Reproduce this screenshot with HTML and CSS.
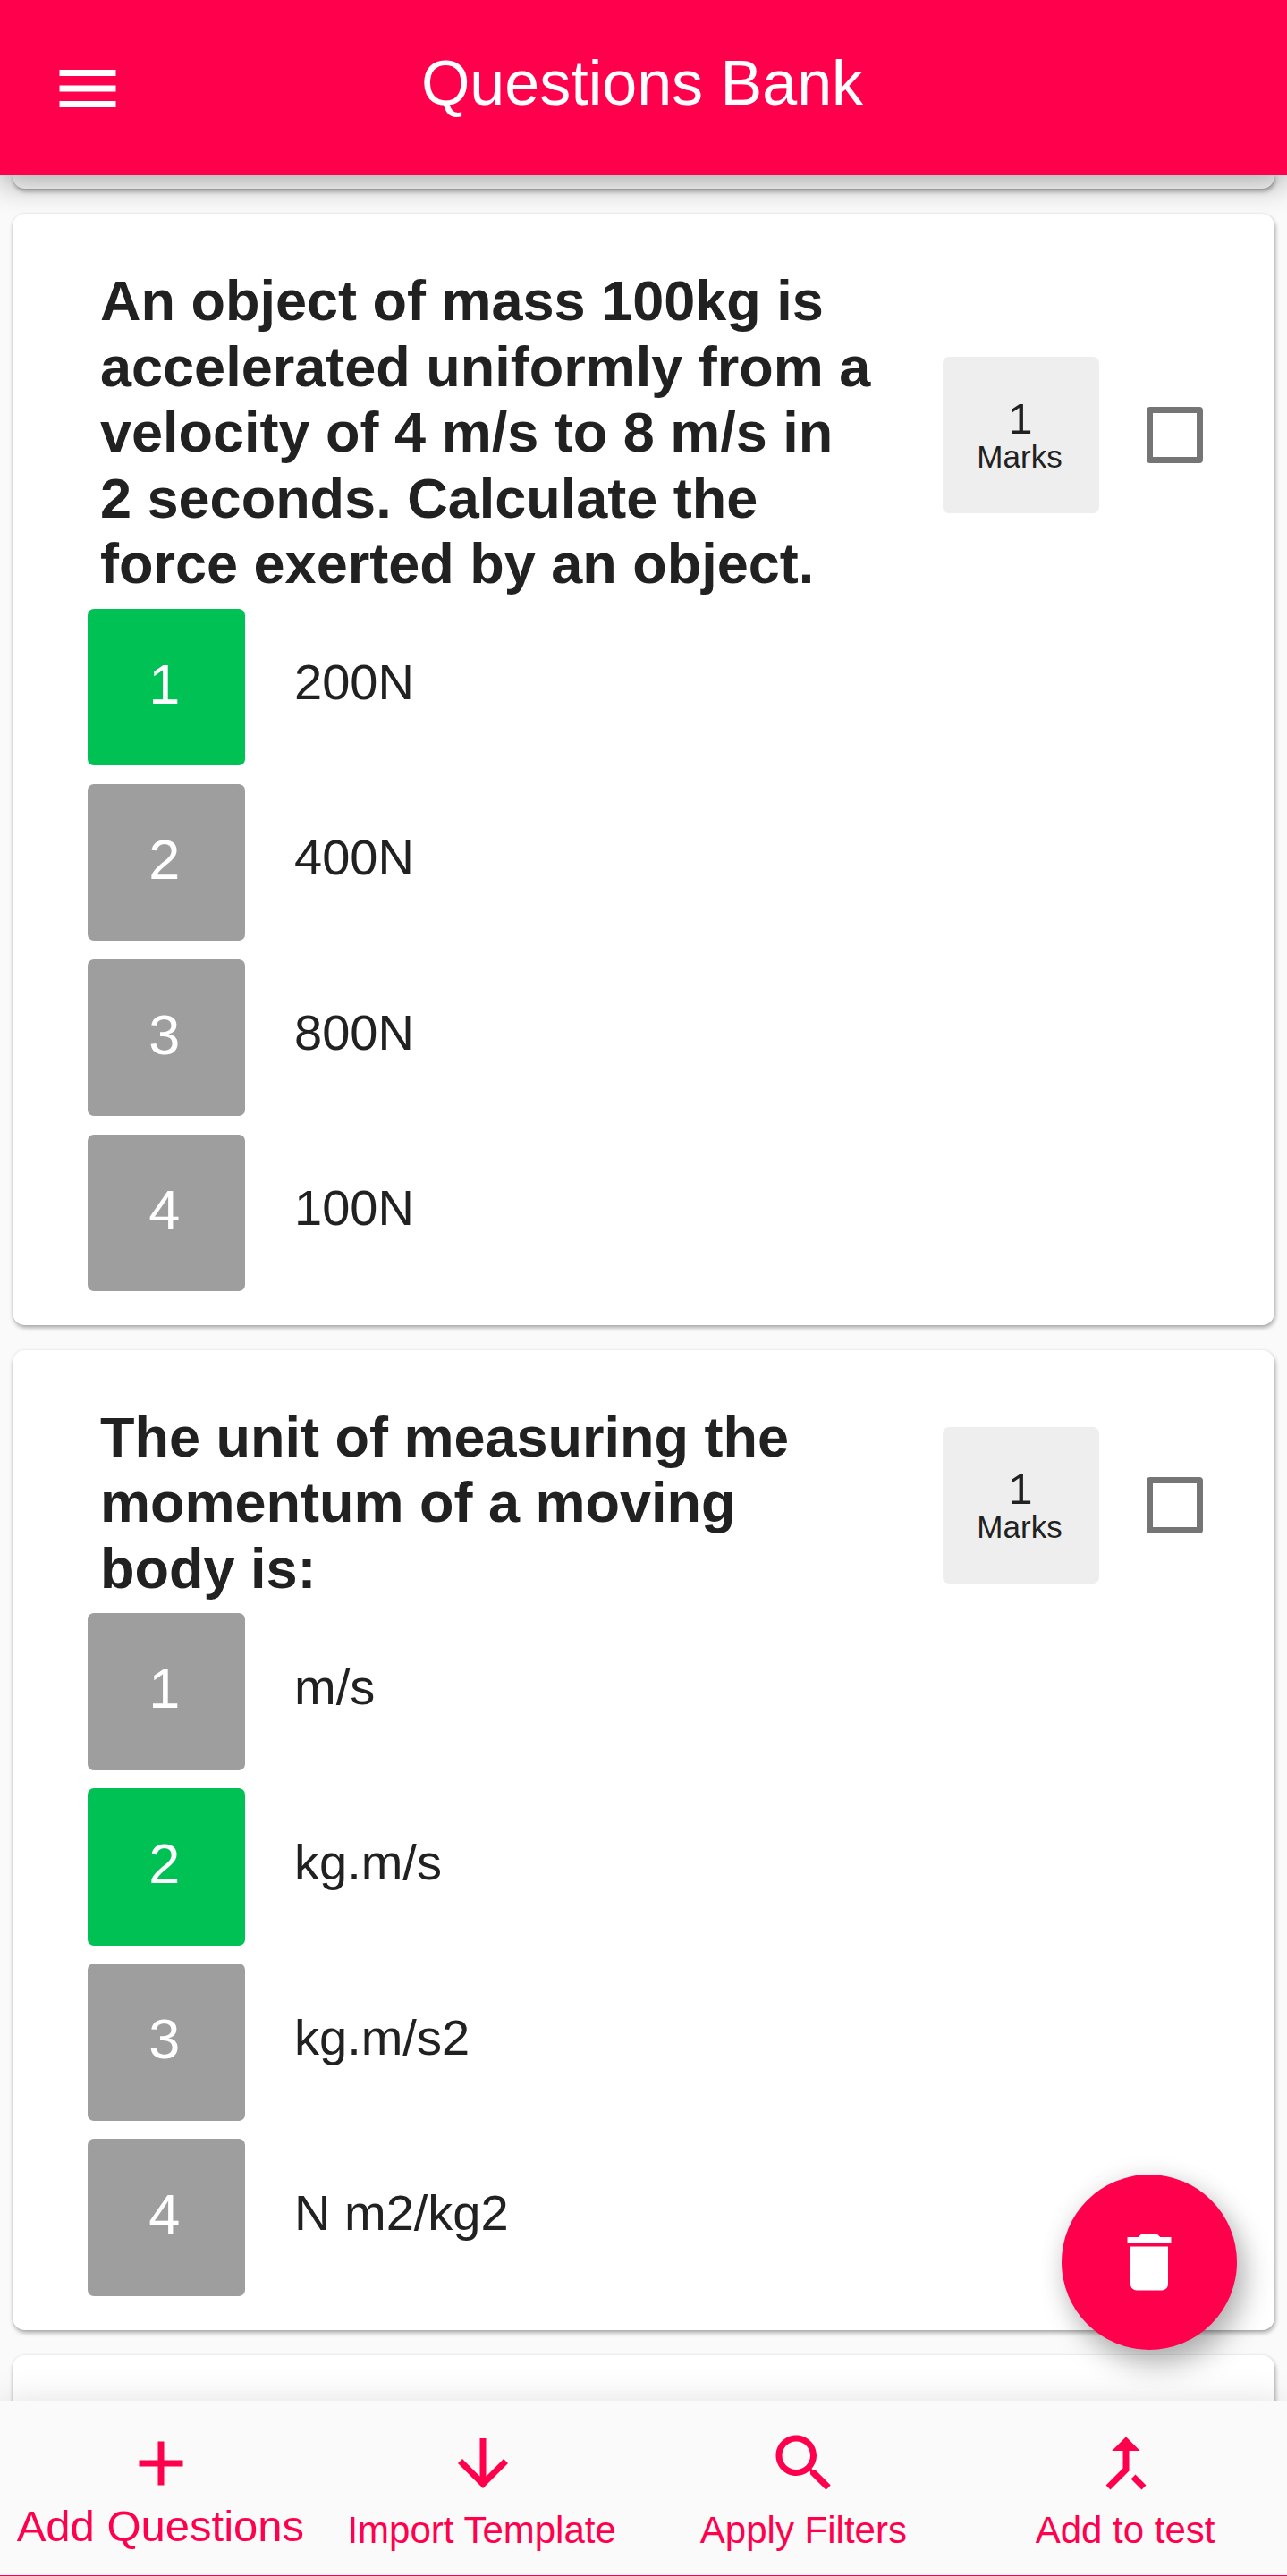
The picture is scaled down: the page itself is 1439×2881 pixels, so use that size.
FILE: index.html
```html
<!DOCTYPE html>
<html lang="en">
<head>
<meta charset="utf-8">
<title>Questions Bank</title>
<link rel="stylesheet" href="styles.css">
</head>
<body>
<div class="app">
  <header class="app-bar">
    <svg class="icon menu-icon" viewBox="0 0 24 24"><path d="M3 18h18v-2H3v2zm0-5h18v-2H3v2zm0-7v2h18V6H3z"/></svg>
    <h1 class="app-title">Questions Bank</h1>
  </header>

  <main class="list">
    <article class="card card-prev"></article>

    <article class="card">
      <div class="card-head">
        <h2 class="question">An object of mass 100kg is accelerated uniformly from a velocity of 4 m/s to 8 m/s in 2 seconds. Calculate the force exerted by an object.</h2>
        <div class="marks"><span class="marks-value">1</span><span class="marks-label">Marks</span></div>
        <span class="checkbox"></span>
      </div>
      <ol class="options">
        <li class="option"><span class="tile correct">1</span><span class="answer">200N</span></li>
        <li class="option"><span class="tile">2</span><span class="answer">400N</span></li>
        <li class="option"><span class="tile">3</span><span class="answer">800N</span></li>
        <li class="option"><span class="tile">4</span><span class="answer">100N</span></li>
      </ol>
    </article>

    <article class="card">
      <div class="card-head">
        <h2 class="question">The unit of measuring the momentum of a moving body is:</h2>
        <div class="marks"><span class="marks-value">1</span><span class="marks-label">Marks</span></div>
        <span class="checkbox"></span>
      </div>
      <ol class="options">
        <li class="option"><span class="tile">1</span><span class="answer">m/s</span></li>
        <li class="option"><span class="tile correct">2</span><span class="answer">kg.m/s</span></li>
        <li class="option"><span class="tile">3</span><span class="answer">kg.m/s2</span></li>
        <li class="option"><span class="tile">4</span><span class="answer">N m2/kg2</span></li>
      </ol>
    </article>

    <article class="card card-next"></article>
  </main>

  <nav class="bottom-nav">
    <a class="nav-item active">
      <svg class="icon" viewBox="0 0 24 24"><path d="M19 13h-6v6h-2v-6H5v-2h6V5h2v6h6v2z"/></svg>
      <span class="nav-label">Add Questions</span>
    </a>
    <a class="nav-item">
      <svg class="icon" viewBox="0 0 24 24"><path d="M20 12l-1.41-1.41L13 16.17V4h-2v12.17l-5.58-5.59L4 12l8 8 8-8z"/></svg>
      <span class="nav-label">Import Template</span>
    </a>
    <a class="nav-item">
      <svg class="icon" viewBox="0 0 24 24"><path d="M15.5 14h-.79l-.28-.27C15.41 12.59 16 11.11 16 9.5 16 5.91 13.09 3 9.5 3S3 5.91 3 9.5 5.91 16 9.5 16c1.61 0 3.09-.59 4.23-1.57l.27.28v.79l5 4.99L20.49 19l-4.99-5zm-6 0C7.01 14 5 11.99 5 9.5S7.01 5 9.5 5 14 7.01 14 9.5 11.99 14 9.5 14z"/></svg>
      <span class="nav-label">Apply Filters</span>
    </a>
    <a class="nav-item">
      <svg class="icon" viewBox="0 0 24 24"><path d="M17 20.41L18.41 19 15 15.59 13.59 17 17 20.41zM7.5 8H11v5.59L5.59 19 7 20.41l6-6V8h3.5L12 3.5 7.5 8z"/></svg>
      <span class="nav-label">Add to test</span>
    </a>
  </nav>

  <button class="fab" aria-label="Delete">
    <svg class="icon" viewBox="0 0 24 24"><path d="M6 19c0 1.1.9 2 2 2h8c1.1 0 2-.9 2-2V7H6v12zM19 4h-3.5l-1-1h-5l-1 1H5v2h14V4z"/></svg>
  </button>
</div>
</body>
</html>
```
FILE: styles.css
```css
* { box-sizing: border-box; }

body {
  margin: 0;
  font-family: "Liberation Sans", Arial, sans-serif;
  color: #212121;
  background: #fafafa;
}

.app {
  position: relative;
  display: flex;
  flex-direction: column;
  height: 2881px;
  overflow: hidden;
}

.icon {
  display: block;
  flex: none;
  width: 84px;
  height: 84px;
  fill: currentColor;
}

/* Top bar */
.app-bar {
  position: relative;
  z-index: 2;
  flex: none;
  display: grid;
  grid-template-columns: 140px 1fr 143px;
  align-items: center;
  height: 196px;
  padding-top: 2px;
  color: #fff;
  background: #ff004d;
  box-shadow: 0 10px 32px rgba(0, 0, 0, .33);
}

.menu-icon { justify-self: end; }

.app-title {
  margin: 0;
  padding-bottom: 12px;
  font-size: 70px;
  font-weight: 400;
  line-height: 80px;
  text-align: center;
}

/* Question list */
.list {
  flex: 1;
  min-height: 0;
  display: flex;
  flex-direction: column;
  gap: 28px;
  padding: 0 14px;
  overflow: hidden;
}

.card {
  flex: none;
  padding: 61px 0 27.5px;
  border-radius: 14px;
  background: #fff;
  box-shadow: 1px 3px 5px rgba(0, 0, 0, .32), 0 0 3px rgba(0, 0, 0, .08);
}

.card-prev {
  height: 15.25px;
  padding: 0;
  border-radius: 0 0 14px 14px;
}

.card-next { height: 100px; }

.card-head {
  display: flex;
  align-items: center;
  padding: 0 80px 0 98px;
  margin-bottom: 2.65px;
}

.question {
  width: 868px;
  margin: 0;
  font-size: 63px;
  font-weight: 700;
  line-height: 73.5px;
}

.marks {
  display: flex;
  flex-direction: column;
  align-items: center;
  justify-content: center;
  width: 175px;
  height: 175px;
  margin: 5px 0 0 74px;
  padding: 0 3px 1px 0;
  border-radius: 7px;
  background: #eee;
}

.marks-value {
  padding-left: 2px;
  font-size: 49px;
  line-height: 49px;
}

.marks-label {
  font-size: 35px;
  line-height: 35px;
}

.checkbox {
  width: 63px;
  height: 63px;
  margin: 5px 0 0 auto;
  border: 7px solid #757575;
  border-radius: 4px;
}

.options {
  margin: 0;
  padding: 0;
  list-style: none;
}

.option {
  display: flex;
  align-items: center;
  height: 196px;
  padding-left: 84px;
}

.tile {
  width: 175.5px;
  height: 175.5px;
  padding-right: 4px;
  border-radius: 7px;
  font-size: 63px;
  line-height: 169px;
  text-align: center;
  color: #fff;
  background: #9e9e9e;
}

.tile.correct { background: #00c254; }

.answer {
  margin-left: 55.5px;
  padding-bottom: 11px;
  font-size: 56px;
  line-height: 64px;
}

/* Bottom navigation */
.bottom-nav {
  position: relative;
  z-index: 2;
  flex: none;
  display: grid;
  grid-template-columns: repeat(4, 1fr);
  height: 196.5px;
  padding-top: 28px;
  border-bottom: 1px solid #ff004d;
  color: #ff004d;
  background: #fafafa;
  box-shadow: 0 0 36px rgba(0, 0, 0, .12);
}

.nav-item {
  display: flex;
  flex-direction: column;
  align-items: center;
}

.nav-label {
  margin-top: 5px;
  padding-right: 2px;
  font-size: 42px;
  line-height: 56px;
  white-space: nowrap;
}

.active .nav-label {
  margin-top: 0;
  padding-right: 1px;
  font-size: 49px;
}

/* Floating delete button over the list */
.fab {
  position: absolute;
  z-index: 1;
  right: 56.5px;
  bottom: 253px;
  display: flex;
  align-items: center;
  justify-content: center;
  width: 196px;
  height: 196px;
  padding: 0;
  border: 0;
  border-radius: 50%;
  color: #fff;
  background: #ff004d;
  box-shadow: 9px 17px 32px rgba(0, 0, 0, .28), 0 0 28px rgba(0, 0, 0, .08);
}
```
